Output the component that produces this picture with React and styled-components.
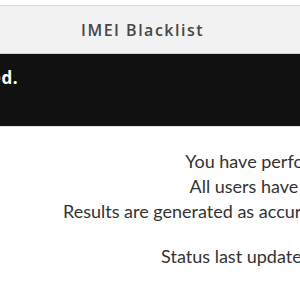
import React from "react";
import styled, { createGlobalStyle } from "styled-components";

const GlobalStyle = createGlobalStyle`
  html, body {
    margin: 0;
    padding: 0;
    background: #ffffff;
    overflow: hidden;
  }
`;

const Page = styled.div`
  width: 700px;
  padding-top: 5px;
  font-family: "Open Sans", "Noto Sans", sans-serif;
`;

const TitleBar = styled.header`
  display: flex;
  align-items: center;
  height: 47px;
  padding-left: 81px;
  background: #f2f2f2;
  border-top: 1px solid #dddddd;
  border-bottom: 1px solid #d4d4d4;
`;

const Title = styled.h1`
  margin: 0;
  font-size: 16px;
  font-weight: 600;
  color: #474747;
  letter-spacing: 1.5px;
`;

const Banner = styled.div`
  display: flex;
  height: 72px;
  background: #111111;
  border-bottom: 1px solid #e2e2e2;
`;

/* message overflows to the left, only its tail is on screen */
const BannerEdge = styled.div`
  display: flex;
  justify-content: flex-end;
  width: 18px;
  padding-top: 14px;
`;

const BannerText = styled.span`
  flex-shrink: 0;
  white-space: nowrap;
  font-family: "Open Sans", sans-serif;
  font-weight: 700;
  font-size: 17px;
  line-height: 20px;
  letter-spacing: 0.5px;
  color: #ffffff;
`;

const Main = styled.main`
  padding-top: 22px;
  text-align: center;
  font-family: Lato, "Open Sans", sans-serif;
  font-size: 18px;
  line-height: 25px;
  color: #333333;
`;

const Line = styled.p`
  margin: 0;
  white-space: nowrap;
  margin-top: ${(p) => (p.$gap ? "20px" : "0")};
`;

export default function App() {
  return (
    <>
      <GlobalStyle />
      <Page>
        <TitleBar>
          <Title>IMEI Blacklist</Title>
        </TitleBar>
        <Banner>
          <BannerEdge>
            <BannerText>The service is temporarily limited.</BannerText>
          </BannerEdge>
        </Banner>
        <Main>
          <Line>You have performed 12 of 30 free checks.</Line>
          <Line>All users have 30 free lookups every day.</Line>
          <Line>Results are generated as accurately as possible from the GSMA database.</Line>
          <Line $gap>Status last updated: 14 March 2014 09:31 GMT</Line>
        </Main>
      </Page>
    </>
  );
}
